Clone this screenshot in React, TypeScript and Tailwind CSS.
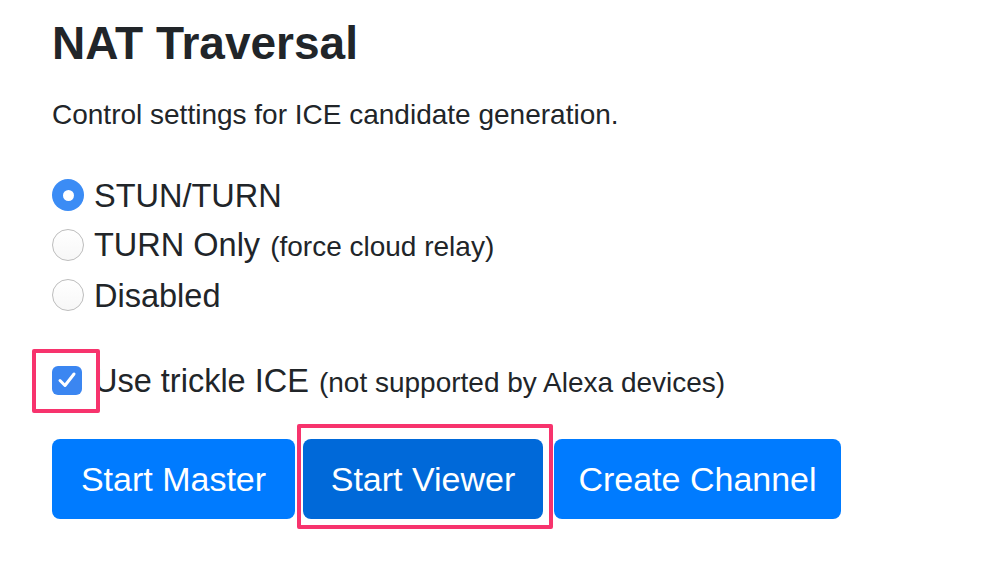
import React, { useState } from 'react';

type Mode = 'stun' | 'turn' | 'off';

const Radio: React.FC<{ checked: boolean; onClick: () => void }> = ({ checked, onClick }) => (
  <span
    onClick={onClick}
    className={
      checked
        ? 'w-[32px] h-[32px] rounded-full bg-[#3b8cf5] flex items-center justify-center shrink-0'
        : 'w-[32px] h-[32px] rounded-full bg-gradient-to-b from-white to-[#f7f7f7] border border-[#bdbdbd] shrink-0'
    }
  >
    {checked && <span className="w-[11px] h-[11px] rounded-full bg-white" />}
  </span>
);

const App: React.FC = () => {
  const [mode, setMode] = useState<Mode>('stun');
  const [trickle, setTrickle] = useState(true);

  const options: { id: Mode; label: string; note?: string }[] = [
    { id: 'stun', label: 'STUN/TURN' },
    { id: 'turn', label: 'TURN Only', note: '(force cloud relay)' },
    { id: 'off', label: 'Disabled' },
  ];

  return (
    <div className="w-[1000px] h-[561px] bg-white pl-[52px] pt-[15px] text-[#212529] font-['Liberation_Sans',Arial,sans-serif]">
      <h1 className="text-[46px] leading-[56px] font-bold">NAT Traversal</h1>
      <p className="mt-[26px] text-[28px] leading-[36px]">Control settings for ICE candidate generation.</p>

      {/* Radios */}
      <div className="mt-[38px] flex flex-col">
        {options.map(o => (
          <label key={o.id} className="flex items-center h-[50px] cursor-pointer" onClick={() => setMode(o.id)}>
            <span className="flex items-center mt-[-2px]">
              <Radio checked={mode === o.id} onClick={() => setMode(o.id)} />
            </span>
            <span className="ml-[10px] text-[32.5px] leading-[50px]">
              {o.label}
              {o.note && <span className="ml-[10px] text-[28px]">{o.note}</span>}
            </span>
          </label>
        ))}
      </div>

      {/* Trickle ICE */}
      <div className="mt-[36px] flex items-center h-[50px]">
        <span className="relative shrink-0 mt-[-4px]" onClick={() => setTrickle(!trickle)}>
          <span className="w-[30px] h-[29px] rounded-[6px] bg-[#3b86f1] flex items-center justify-center">
            {trickle && (
              <svg width="20" height="18" viewBox="0 0 20 18" fill="none">
                <path d="M3 9.5 L8 14.5 L17 3" stroke="white" strokeWidth="3" strokeLinecap="round" strokeLinejoin="round" />
              </svg>
            )}
          </span>
          <span className="absolute left-[-20px] top-[-17px] w-[68px] h-[64px] border-[4px] border-[#f7336d] rounded-[2px]" />
        </span>
        <span className="ml-[12px] text-[32.5px] leading-[50px]">
          Use trickle ICE
          <span className="ml-[10px] text-[28px]">(not supported by Alexa devices)</span>
        </span>
      </div>

      {/* Buttons */}
      <div className="mt-[32px] flex items-center">
        <button className="w-[243px] h-[80px] rounded-[8px] bg-[#007bff] text-white text-[34px]">Start Master</button>
        <div className="relative ml-[8px]">
          <button className="w-[240px] h-[80px] rounded-[8px] bg-[#0069d9] text-white text-[34px]">Start Viewer</button>
          <span className="absolute left-[-6px] top-[-15px] w-[256px] h-[105px] border-[4px] border-[#f7336d] rounded-[2px] pointer-events-none" />
        </div>
        <button className="ml-[11px] w-[287px] h-[80px] rounded-[8px] bg-[#007bff] text-white text-[34px]">Create Channel</button>
      </div>
    </div>
  );
};

export default App;
